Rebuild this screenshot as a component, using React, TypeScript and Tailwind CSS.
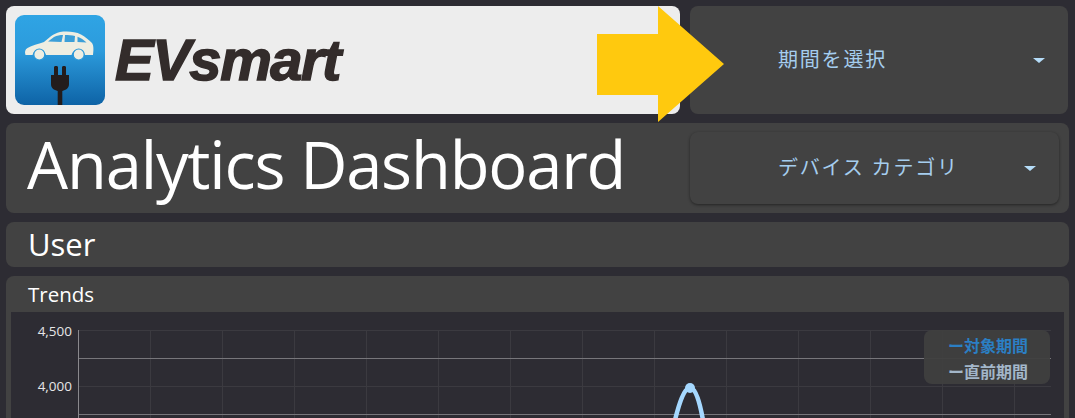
import React from "react";

const gridX = [78, 150, 222, 294, 366, 438, 510, 582, 654, 726, 798, 870, 942, 1014];

const Caret = () => (
  <svg width="12" height="5" viewBox="0 0 12 5" className="shrink-0">
    <path d="M0 0H12L6 5Z" fill="#b5dcf8" />
  </svg>
);

const LogoIcon = () => (
  <svg width="90" height="90" viewBox="0 0 90 90" className="shrink-0">
    <defs>
      <linearGradient id="logoBg" x1="0" y1="0" x2="0" y2="1">
        <stop offset="0" stopColor="#2fa4e4" />
        <stop offset="0.4" stopColor="#2c9bdc" />
        <stop offset="1" stopColor="#0e63a6" />
      </linearGradient>
    </defs>
    <rect width="90" height="90" rx="9" fill="url(#logoBg)" />
    <path
      d="M10.500 40C9.500 37 10 34.500 12.500 33C17 30.500 23 29 29 27C34 23 38 18.500 45 17C52 16 60 16.500 66 19.500C70 21.500 74 25 77 28C79 31 78.500 36 78 40H70C68 33 58 33 56.500 40H31C29 33 19 33 17.500 40Z"
      fill="#eeeee2"
    />
    <path d="M33 26.500L39 22C42 20.500 45 20 48 20L46.500 27Z" fill="#3b9fd8" />
    <path d="M50 20C53 20 57 20.200 60 21L59.500 27H49.500Z" fill="#3b9fd8" />
    <path d="M62.500 21.800C65.500 22.800 69 25 71.500 27.500L62.500 27Z" fill="#3b9fd8" />
    <circle cx="24.300" cy="39.500" r="5.500" fill="#eeeee2" stroke="#2b98d8" strokeWidth="1.200" />
    <circle cx="63.700" cy="39.500" r="5.500" fill="#eeeee2" stroke="#2b98d8" strokeWidth="1.200" />
    <path
      d="M39 52C39 50.500 43 50.500 43 52V60H47V52C47 50.500 51 50.500 51 52V60H54V69C54 73 51 75 47.300 76V90H42.700V76C39 75 36 73 36 69V60H39Z"
      fill="#231c1c"
    />
  </svg>
);

const Select = ({ label, className }: { label: string; className: string }) => (
  <div className={`flex items-center justify-between rounded-lg bg-[#424242] text-[#a5cdee] ${className}`}>
    <span className="pl-[88px] text-[20px] leading-none tracking-[1.8px]">{label}</span>
    <Caret />
  </div>
);

const App = () => {
  return (
    <div
      className="relative flex h-[418px] w-[1075px] flex-col gap-[9px] overflow-hidden bg-[#2d2c33] p-[6px] text-white"
      style={{ fontFamily: '"Open Sans", "Noto Sans CJK JP", sans-serif' }}
    >
      <div className="flex h-[108px] shrink-0 gap-[10px]">
        <div className="flex w-[674px] items-center gap-[10px] rounded-lg bg-[#ededed] pl-[9px]">
          <LogoIcon />
          <span
            className="text-[58px] font-bold italic leading-none tracking-[-1.500px] text-[#332c2b] [-webkit-text-stroke:1.500px_#332c2b]"
            style={{ fontFamily: '"Liberation Sans", sans-serif' }}
          >
            EVsmart
          </span>
        </div>
        <Select label="期間を選択" className="w-[378px] pr-[23px]" />
      </div>

      <div className="flex h-[90px] shrink-0 items-center rounded-lg bg-[#424242] pl-[21px] pr-[9px]">
        <h1 className="w-[663px] pb-[8px] text-[65px] font-medium leading-none tracking-[-1.150px]">Analytics Dashboard</h1>
        <Select label="デバイス カテゴリ" className="h-[72px] w-[369px] pr-[23px] shadow-[0_1px_3px_rgba(0,0,0,0.45)]" />
      </div>

      <div className="flex h-[45px] shrink-0 items-center rounded-lg bg-[#424242] pl-[22px]">
        <h2 className="text-[31px] font-medium leading-none">User</h2>
      </div>

      <div className="flex flex-1 flex-col rounded-t-lg bg-[#424242] px-[5px]">
        <div className="flex h-[36px] shrink-0 items-center pl-[17px] text-[20.500px] font-medium leading-none">Trends</div>
        <div className="relative flex-1 bg-[#2d2c33]">
          <svg width="1052" height="106" viewBox="11 312 1052 106" className="block">
            {[330.5, 386.5].map((y) => (
              <line key={y} x1="78" x2="1051" y1={y} y2={y} stroke="#3b3a40" />
            ))}
            {gridX.slice(1).map((x) => (
              <line key={x} x1={x + 0.5} x2={x + 0.5} y1="330" y2="418" stroke="#3b3a40" />
            ))}
            {[358.5, 414.5].map((y) => (
              <line key={y} x1="78" x2="1051" y1={y} y2={y} stroke="#77767b" />
            ))}
            <line x1="78.500" x2="78.500" y1="330" y2="418" stroke="#8a898d" />
            <text x="72" y="336" textAnchor="end" fontSize="13.500" fontWeight="500" fill="#e6e6e6">4,500</text>
            <text x="72" y="391" textAnchor="end" fontSize="13.500" fontWeight="500" fill="#e6e6e6">4,000</text>
            <path d="M675 420C679 404 684 388 690 388C696 388 700 404 703 420" fill="none" stroke="#a5d8ff" strokeWidth="4.500" />
            <circle cx="690" cy="388" r="5" fill="#a5d8ff" />
          </svg>
          <div className="absolute left-[913px] top-[18px] flex h-[54px] w-[126px] flex-col items-end justify-center rounded-lg bg-[#3f3f3f]/95 pr-[22px] pt-[3px] text-[16px] font-bold leading-[26px]">
            <span className="text-[#2b7fc4]">ー対象期間</span>
            <span className="text-[#a3b6c9]">ー直前期間</span>
          </div>
        </div>
      </div>

      <svg width="128" height="118" viewBox="0 0 128 118" className="absolute left-[597px] top-[5px]">
        <path d="M0 29H61V1L127 59L61 117V90H0Z" fill="#ffc90e" />
      </svg>
    </div>
  );
};

export default App;
